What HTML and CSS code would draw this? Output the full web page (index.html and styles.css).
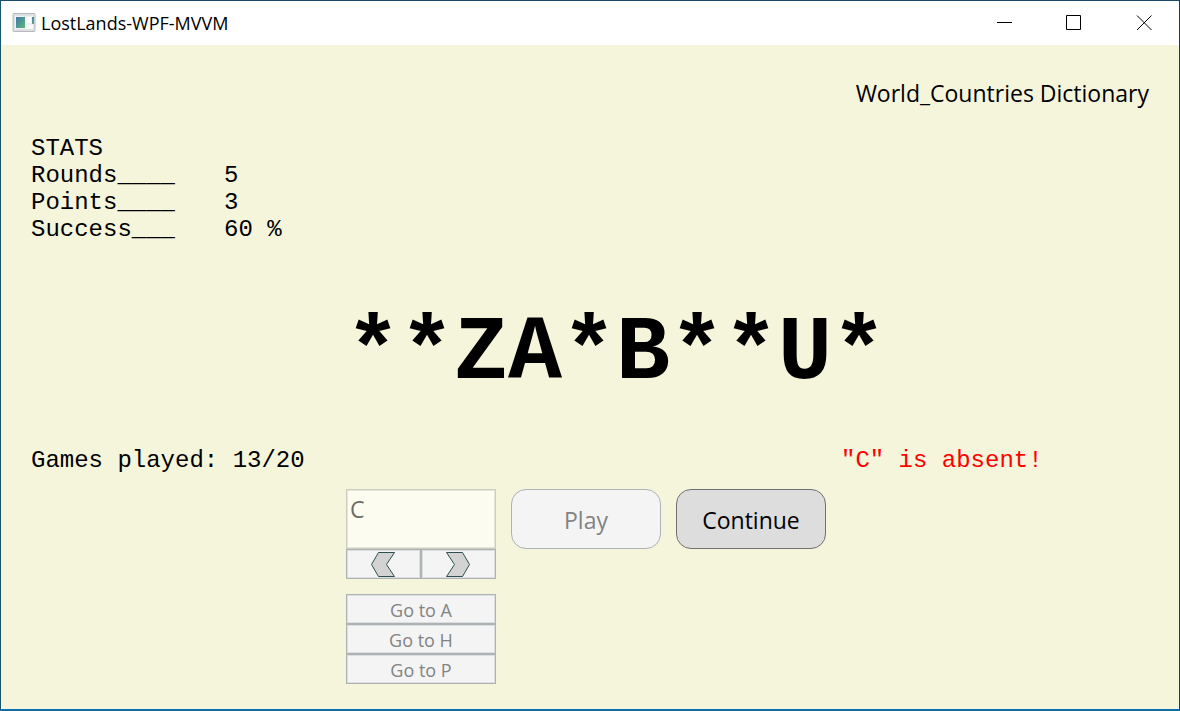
FILE: index.html
```html
<!DOCTYPE html>
<html lang="en">
<head>
<meta charset="utf-8">
<title>LostLands-WPF-MVVM</title>
<link rel="stylesheet" href="styles.css">
</head>
<body>
<div class="window">
  <header class="titlebar">
    <svg class="app-icon" width="24" height="20" viewBox="0 0 24 20" aria-hidden="true">
      <defs>
        <linearGradient id="pane" x1="0" y1="0" x2="1" y2="1">
          <stop offset="0" stop-color="#3f78a8"/>
          <stop offset="1" stop-color="#5fb87a"/>
        </linearGradient>
      </defs>
      <rect x="1" y="0.5" width="22" height="18" rx="1" fill="#dfe2e5" stroke="#b4b8bd"/>
      <rect x="3" y="3" width="18" height="13" fill="#f0f2f3"/>
      <rect x="4" y="4" width="9" height="11" fill="url(#pane)"/>
      <rect x="15" y="4" width="4" height="6" fill="#ffffff"/>
      <rect x="20" y="4" width="2" height="7" fill="url(#pane)"/>
      <rect x="15" y="12" width="6" height="4" fill="#fafafa"/>
    </svg>
    <h1 class="title">LostLands-WPF-MVVM</h1>
    <div class="caption-buttons">
      <button class="caption-button" type="button" aria-label="Minimize"><svg width="16" height="16" viewBox="0 0 16 16"><path d="M1 7.5H16"/></svg></button>
      <button class="caption-button" type="button" aria-label="Maximize"><svg width="16" height="16" viewBox="0 0 16 16"><path d="M.5 .5H14.5V14.5H.5Z"/></svg></button>
      <button class="caption-button" type="button" aria-label="Close"><svg width="16" height="16" viewBox="0 0 16 16"><path d="M1 .5L15.5 15M15.5 .5L1 15"/></svg></button>
    </div>
  </header>
  <main class="game">
    <p class="dictionary">World_Countries Dictionary</p>
    <table class="stats">
      <caption>STATS</caption>
      <tbody>
        <tr><th scope="row">Rounds____</th><td>5</td></tr>
        <tr><th scope="row">Points____</th><td>3</td></tr>
        <tr><th scope="row">Success___</th><td>60 %</td></tr>
      </tbody>
    </table>
    <div class="columns word-row">
      <p class="word">**ZA*B**U*</p>
    </div>
    <div class="columns status-row">
      <p class="played">Games played: 13/20</p>
      <p class="message">"C" is absent!</p>
    </div>
    <div class="columns controls">
      <div class="picker">
        <input class="letter" type="text" value="C" aria-label="Letter" disabled>
        <div class="steps">
          <button class="flat" type="button" aria-label="Previous letter" disabled><svg class="chevron" width="26" height="25" viewBox="0 0 26 25"><path d="M7.5 .5H23.5L15.5 12.5L23.5 24.5H7.5L.5 12.5Z"/></svg></button>
          <button class="flat" type="button" aria-label="Next letter" disabled><svg class="chevron" width="26" height="25" viewBox="0 0 26 25"><path d="M.5 .5H16.5L23.5 12.5L16.5 24.5H.5L8.5 12.5Z"/></svg></button>
        </div>
        <div class="jumps">
          <button class="flat" type="button" disabled>Go to A</button>
          <button class="flat" type="button" disabled>Go to H</button>
          <button class="flat" type="button" disabled>Go to P</button>
        </div>
      </div>
      <button class="action" type="button" disabled>Play</button>
      <button class="action" type="button">Continue</button>
    </div>
  </main>
</div>
</body>
</html>
```
FILE: styles.css
```css
* {
  box-sizing: border-box;
}

body {
  margin: 0;
  color: #000;
  font-family: "Segoe UI", "Open Sans", sans-serif;
}

h1,
p {
  margin: 0;
}

button,
input {
  margin: 0;
  font-family: inherit;
}

.window {
  display: flex;
  flex-direction: column;
  min-height: 100vh;
  border-style: solid;
  border-width: 1px 1px 2px;
  border-color: #1c4a6c #1f3864 #0a6fb0 #1b5470;
  background: #f5f5dc;
}

.titlebar {
  display: flex;
  align-items: center;
  height: 44px;
  padding-left: 11px;
  background: #fff;
}

.title {
  margin-left: 5px;
  font-size: 18px;
  font-weight: 400;
  line-height: 24px;
}

.caption-buttons {
  display: flex;
  align-self: stretch;
  margin-left: auto;
}

.caption-button {
  display: flex;
  align-items: center;
  justify-content: center;
  width: 70px;
  padding: 0;
  border: 0;
  background: transparent;
}

.caption-button path {
  fill: none;
  stroke: #000;
}

.game {
  padding: 30px 30px 24px;
}

.dictionary {
  font-size: 23px;
  line-height: 36px;
  text-align: right;
}

.stats,
.played,
.message {
  font-family: "Courier New", "Liberation Mono", monospace;
  font-size: 24px;
  line-height: 27px;
}

.stats {
  margin-top: 24px;
  border-collapse: collapse;
}

.stats caption {
  text-align: left;
}

.stats th,
.stats td {
  padding: 0;
  font-weight: 400;
  text-align: left;
}

.stats th {
  width: 193px;
}

.columns {
  display: grid;
  grid-template-columns: 300px repeat(3, 150px) 1fr;
  column-gap: 15px;
}

.word-row {
  margin-top: 60px;
}

.word {
  grid-column: 2 / -1;
  font-family: "Courier New", "Liberation Mono", monospace;
  font-size: 90px;
  font-weight: 700;
  line-height: 102px;
}

.status-row {
  margin-top: 42px;
}

.message {
  grid-column: 5;
  color: #f00;
}

.controls {
  align-items: start;
  margin-top: 15px;
}

.picker {
  display: flex;
  grid-column: 2;
  flex-direction: column;
}

.letter {
  width: 100%;
  height: 60px;
  padding: 0 3px 20px;
  border: 1px solid #cccdbf;
  border-radius: 0;
  background: #fcfcf0;
  box-shadow: inset 0 0 0 1px #e6e7d9;
  color: #6d6d68;
  font-size: 23px;
}

.steps {
  display: grid;
  grid-template-columns: 1fr 1fr;
}

.jumps {
  display: grid;
  margin-top: 15px;
}

.flat {
  display: flex;
  align-items: center;
  justify-content: center;
  height: 30px;
  padding: 0;
  border: 1px solid #adb2b5;
  background: #f4f4f4;
  box-shadow: inset 0 0 0 1px #dcdedf;
  color: #838383;
  font-size: 18px;
}

.jumps .flat {
  padding-top: 2px;
}

.chevron path {
  fill: #d3d3d3;
  stroke: #2f4f4f;
}

.action {
  height: 60px;
  padding: 2px 0 0;
  border: 1px solid #707070;
  border-radius: 15px;
  background: #ddd;
  color: #000;
  font-size: 23px;
}

.action:disabled {
  border-color: #adb2b5;
  background: #f4f4f4;
  color: #838383;
}
```
